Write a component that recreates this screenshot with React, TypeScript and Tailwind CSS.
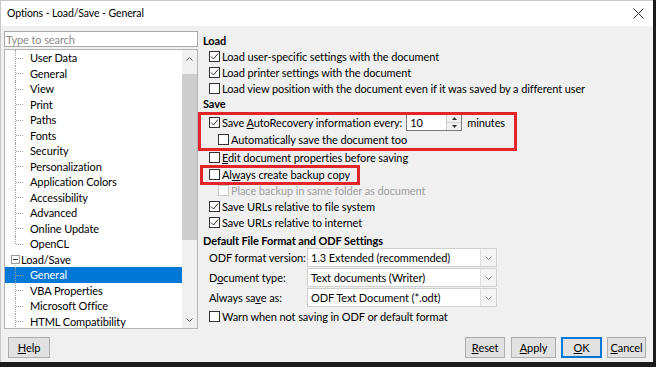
import React from 'react'

const font = { fontFamily: 'Lato, "Liberation Sans", Arial, sans-serif' }

function Check({ checked, disabled }: { checked?: boolean; disabled?: boolean }) {
  return (
    <span
      className={`flex h-[11px] w-[11px] shrink-0 items-center justify-center border bg-white ${
        disabled ? 'border-[#cccccc] bg-[#f0f0f0]' : 'border-[#333333]'
      }`}
    >
      {checked && (
        <svg width="9" height="9" viewBox="0 0 9 9">
          <polyline points="1,4.5 3.5,7 8,1.5" fill="none" stroke="#333" strokeWidth="1" />
        </svg>
      )}
    </span>
  )
}

function CheckRow({
  checked,
  disabled,
  indent,
  children,
  className = '',
}: {
  checked?: boolean
  disabled?: boolean
  indent?: boolean
  children: React.ReactNode
  className?: string
}) {
  return (
    <div className={`flex h-[16px] items-center gap-[2px] ${indent ? 'pl-[20px]' : 'pl-[11px]'} ${className}`}>
      <Check checked={checked} disabled={disabled} />
      <span className={`whitespace-nowrap ${disabled ? 'text-[#a0a0a0]' : 'text-black'}`}>{children}</span>
    </div>
  )
}

function Heading({ children, className = '' }: { children: React.ReactNode; className?: string }) {
  return <div className={`flex h-[16px] items-center pl-[5px] font-bold ${className}`}>{children}</div>
}

function Select({ value }: { value: string }) {
  return (
    <div className="flex h-[19px] w-[190px] items-center border border-[#d0d0d0] bg-white">
      <span className="flex-1 whitespace-nowrap pl-[3px]">{value}</span>
      <span className="flex h-full w-[16px] items-center justify-center border-l border-[#e0e0e0] bg-[#f4f4f4]">
        <svg width="7" height="4" viewBox="0 0 7 4">
          <polyline points="0.5,0.5 3.5,3.5 6.5,0.5" fill="none" stroke="#888" strokeWidth="1" />
        </svg>
      </span>
    </div>
  )
}

function Btn({ children, primary, className = '' }: { children: React.ReactNode; primary?: boolean; className?: string }) {
  return (
    <div
      className={`flex h-[21px] items-center justify-center bg-[#e1e1e1] ${
        primary ? 'border-2 border-[#0078d7]' : 'border border-[#adadad]'
      } ${className}`}
    >
      {children}
    </div>
  )
}

const tree: { label: string; level: number; selected?: boolean; last?: boolean }[] = [
  { label: 'User Data', level: 1 },
  { label: 'General', level: 1 },
  { label: 'View', level: 1 },
  { label: 'Print', level: 1 },
  { label: 'Paths', level: 1 },
  { label: 'Fonts', level: 1 },
  { label: 'Security', level: 1 },
  { label: 'Personalization', level: 1 },
  { label: 'Application Colors', level: 1 },
  { label: 'Accessibility', level: 1 },
  { label: 'Advanced', level: 1 },
  { label: 'Online Update', level: 1 },
  { label: 'OpenCL', level: 1, last: true },
  { label: 'Load/Save', level: 0 },
  { label: 'General', level: 1, selected: true },
  { label: 'VBA Properties', level: 1 },
  { label: 'Microsoft Office', level: 1 },
  { label: 'HTML Compatibility', level: 1 },
]

function TreeRow({ item }: { item: (typeof tree)[number] }) {
  if (item.level === 0) {
    return (
      <div className="flex h-[15.5px] items-center pl-[6px]">
        <span className="flex h-[9px] w-[9px] items-center justify-center border border-[#999] bg-white">
          <span className="h-px w-[5px] bg-[#333]" />
        </span>
        <span className="pl-[1px] whitespace-nowrap">{item.label}</span>
      </div>
    )
  }
  return (
    <div className={`flex h-[15.5px] items-center ${item.selected ? 'bg-[#0078d7] text-white' : ''}`}>
      <span className="relative h-full w-[25px] shrink-0">
        <span
          className={`absolute left-[10px] top-0 w-px border-l border-dotted border-[#a0a0a0] ${
            item.last ? 'h-1/2' : 'h-full'
          }`}
        />
        <span className="absolute left-[11px] top-1/2 h-px w-[7px] border-t border-dotted border-[#a0a0a0]" />
      </span>
      <span className="whitespace-nowrap">{item.label}</span>
    </div>
  )
}

export default function App() {
  return (
    <div
      className="h-[367px] w-[656px] overflow-hidden bg-[#1c1c1c] text-[11px] leading-none tracking-[-0.1px] text-black"
      style={font}
    >
      <div className="flex h-[362px] w-[653px] flex-col border-l border-t border-[#c8c8c8] bg-[#f0f0f0]">
        {/* Title bar */}
        <div className="flex h-[25px] shrink-0 items-center justify-between bg-white pl-[6px] pr-[8px]">
          <span className="text-[10.5px]">Options - Load/Save - General</span>
          <svg width="11" height="11" viewBox="0 0 11 11" className="mr-[1px]">
            <path d="M0.5 0.5 L10.5 10.5 M10.5 0.5 L0.5 10.5" stroke="#333" strokeWidth="1" />
          </svg>
        </div>

        {/* Body */}
        <div className="flex flex-1">
          {/* Left pane */}
          <div className="flex w-[197px] shrink-0 flex-col pl-[3px] pt-[5px]">
            <div className="flex h-[16px] items-center border border-[#a8a8a8] bg-white pl-[1px] text-[#8a8a8a]">
              Type to search
            </div>
            <div className="mt-[2px] flex h-[280px] overflow-hidden border border-[#b4b4b4] bg-white">
              <div className="flex-1 overflow-hidden">
                {tree.map((t, i) => (
                  <TreeRow key={i} item={t} />
                ))}
              </div>
              <div className="flex w-[15px] shrink-0 flex-col bg-[#f0f0f0]">
                <div className="flex h-[17px] items-center justify-center">
                  <svg width="7" height="4" viewBox="0 0 7 4">
                    <polyline points="0.5,3.5 3.5,0.5 6.5,3.5" fill="none" stroke="#606060" strokeWidth="1" />
                  </svg>
                </div>
                <div className="mt-[7px] h-[166px] bg-[#cdcdcd]" />
                <div className="flex-1" />
                <div className="flex h-[17px] items-center justify-center">
                  <svg width="7" height="4" viewBox="0 0 7 4">
                    <polyline points="0.5,0.5 3.5,3.5 6.5,0.5" fill="none" stroke="#606060" strokeWidth="1" />
                  </svg>
                </div>
              </div>
            </div>
          </div>

          {/* Right pane */}
          <div className="relative flex flex-1 flex-col pt-[6px]">
            <Heading>Load</Heading>
            <CheckRow checked>Load user-specific settings with the document</CheckRow>
            <CheckRow checked>Load printer settings with the document</CheckRow>
            <CheckRow>Load view position with the document even if it was saved by a different user</CheckRow>
            <Heading className="-mt-[1px]">Save</Heading>
            <div className="mt-[2px] flex h-[18px] items-center gap-[2px] pl-[11px]">
              <Check checked />
              <span className="whitespace-nowrap">
                Save <u>A</u>utoRecovery information every:
              </span>
              <div className="ml-[2px] flex h-[17px] w-[56px] border border-[#7a7a7a] bg-white">
                <span className="flex flex-1 items-center pl-[3px]">10</span>
                <div className="flex w-[15px] flex-col border-l border-[#d0d0d0] bg-[#f0f0f0]">
                  <div className="flex flex-1 items-center justify-center border-b border-[#d0d0d0]">
                    <svg width="5" height="3" viewBox="0 0 5 3">
                      <polygon points="0,3 2.5,0 5,3" fill="#333" />
                    </svg>
                  </div>
                  <div className="flex flex-1 items-center justify-center">
                    <svg width="5" height="3" viewBox="0 0 5 3">
                      <polygon points="0,0 2.5,3 5,0" fill="#333" />
                    </svg>
                  </div>
                </div>
              </div>
              <span className="ml-[3px]">minutes</span>
            </div>
            <CheckRow indent>Automatically save the document too</CheckRow>
            <CheckRow className="mt-[2px]">
              <u>E</u>dit document properties before saving
            </CheckRow>
            <CheckRow className="mt-[1px]">
              Al<u>w</u>ays create backup copy
            </CheckRow>
            <CheckRow indent disabled>
              Place backup in same folder as document
            </CheckRow>
            <CheckRow checked>Save URLs relative to file system</CheckRow>
            <CheckRow checked>Save URLs relative to internet</CheckRow>
            <Heading className="mt-[2px]">Default File Format and ODF Settings</Heading>
            <div className="flex h-[19px] items-center">
              <span className="w-[109px] whitespace-nowrap pl-[11px]">ODF format version:</span>
              <Select value="1.3 Extended (recommended)" />
            </div>
            <div className="mt-[1px] flex h-[19px] items-center">
              <span className="w-[109px] whitespace-nowrap pl-[11px]">
                D<u>o</u>cument type:
              </span>
              <Select value="Text documents (Writer)" />
            </div>
            <div className="mt-[1px] flex h-[19px] items-center">
              <span className="w-[109px] whitespace-nowrap pl-[11px]">
                Always sa<u>v</u>e as:
              </span>
              <Select value="ODF Text Document (*.odt)" />
            </div>
            <CheckRow className="mt-[1px]">Warn when not saving in ODF or default format</CheckRow>

            {/* Annotation boxes */}
            <div className="absolute left-0 top-[86px] h-[39px] w-[319px] border-[3px] border-[#e3242b]" />
            <div className="absolute left-[2px] top-[139px] h-[20px] w-[160px] border-[3px] border-[#e3242b]" />
          </div>
        </div>

        {/* Buttons */}
        <div className="flex h-[33px] shrink-0 items-start pb-[4px] pl-[7px] pr-[7px] pt-[8px]">
          <Btn className="w-[42px]">
            <u>H</u>elp
          </Btn>
          <div className="flex-1" />
          <Btn className="w-[40px]">
            <u>R</u>eset
          </Btn>
          <Btn className="ml-[6px] w-[45px]">
            <u>A</u>pply
          </Btn>
          <Btn primary className="ml-[5px] w-[41px]">
            <u>O</u>K
          </Btn>
          <Btn className="ml-[5px] w-[39px]">
            <u>C</u>ancel
          </Btn>
        </div>
      </div>
    </div>
  )
}
